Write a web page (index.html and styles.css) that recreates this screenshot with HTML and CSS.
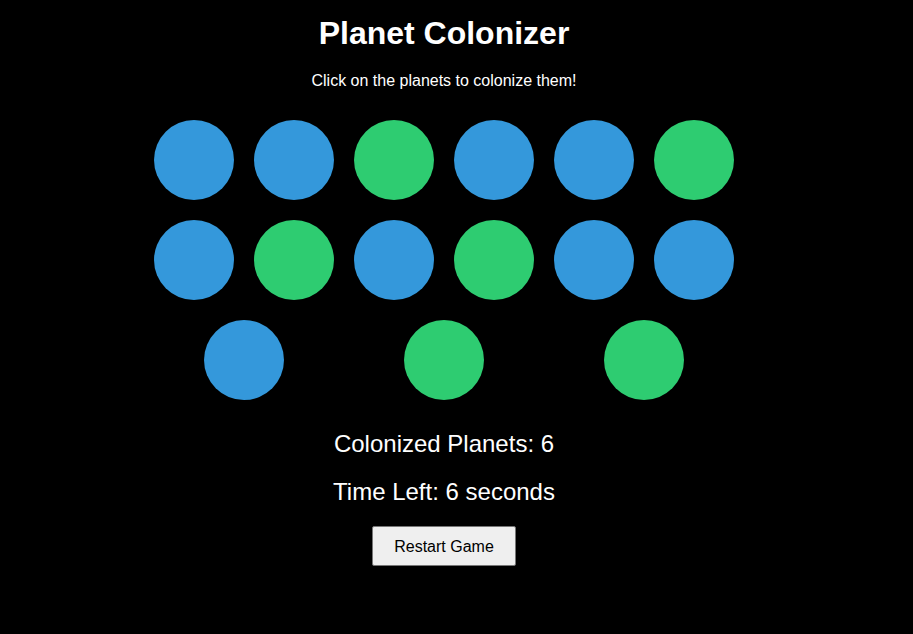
FILE: index.html
```html
<!DOCTYPE html>
<html lang="en">
<head>
<meta charset="utf-8">
<title>Planet Colonizer</title>
<link rel="stylesheet" href="styles.css">
</head>
<body>
<main class="game">
  <h1 class="title">Planet Colonizer</h1>
  <p class="subtitle">Click on the planets to colonize them!</p>
  <div class="planets">
    <div class="planet"></div>
    <div class="planet"></div>
    <div class="planet colonized"></div>
    <div class="planet"></div>
    <div class="planet"></div>
    <div class="planet colonized"></div>
    <div class="planet"></div>
    <div class="planet colonized"></div>
    <div class="planet"></div>
    <div class="planet colonized"></div>
    <div class="planet"></div>
    <div class="planet"></div>
    <div class="planet"></div>
    <div class="planet colonized"></div>
    <div class="planet colonized"></div>
  </div>
  <p class="stat">Colonized Planets: 6</p>
  <p class="stat">Time Left: 6 seconds</p>
  <button class="restart" type="button">Restart Game</button>
</main>
</body>
</html>
```
FILE: styles.css
```css
html, body {
  margin: 0;
  padding: 0;
  background: #000;
}
body {
  color: #fff;
  font-family: "Liberation Sans", Arial, sans-serif;
}
.game {
  width: 888px;
  text-align: center;
  display: flex;
  flex-direction: column;
  align-items: center;
  padding-top: 15px;
}
.title {
  margin: 0;
  font-size: 32px;
  font-weight: bold;
}
.subtitle {
  margin: 20px 0 0;
  font-size: 16px;
}
.planets {
  width: 600px;
  margin-top: 20px;
  display: flex;
  flex-wrap: wrap;
  justify-content: space-around;
}
.planet {
  width: 80px;
  height: 80px;
  margin: 10px;
  border-radius: 50%;
  background: #3498db;
}
.planet.colonized {
  background: #2ecc71;
}
.stat {
  margin: 20px 0 0;
  font-size: 24px;
}
.restart {
  box-sizing: border-box;
  height: 40px;
  margin-top: 20px;
  padding: 2px 21px 0;
  font-family: "Liberation Sans", Arial, sans-serif;
  font-size: 16px;
  color: #000;
  background: #efefef;
  border: 1px solid #767676;
  border-radius: 2px;
}
```
